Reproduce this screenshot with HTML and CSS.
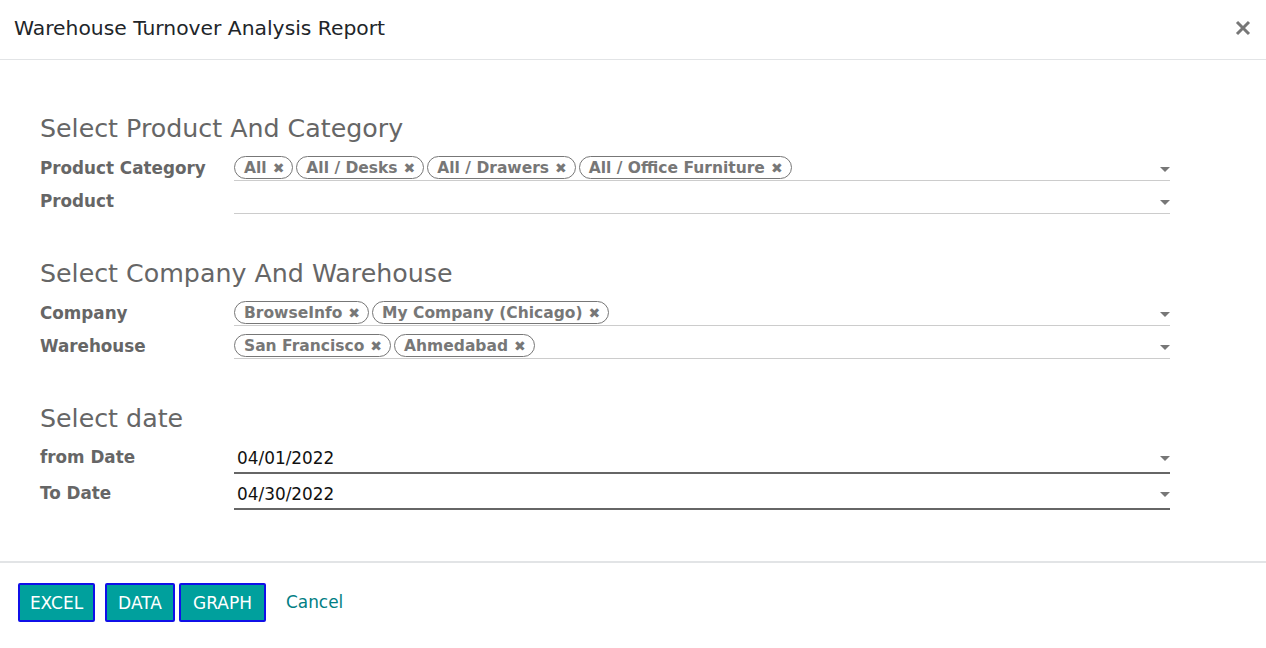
FILE: index.html
```html
<!DOCTYPE html>
<html>
<head>
<meta charset="utf-8">
<link rel="stylesheet" href="styles.css">
</head>
<body>
<div class="modal">
  <header class="modal-header">
    <h4 class="modal-title">Warehouse Turnover Analysis Report</h4>
    <svg class="close" width="16" height="16" viewBox="0 0 16 16"><path d="M2 2 L14 14 M14 2 L2 14" stroke="#777" stroke-width="3" stroke-linecap="butt"/></svg>
  </header>
  <main class="modal-body">
    <section class="group">
      <h3 class="group-title">Select Product And Category</h3>
      <div class="row">
        <label class="label">Product Category</label>
        <div class="field">
          <div class="tags">
            <span class="tag">All <span class="x">✖</span></span>
            <span class="tag">All / Desks <span class="x">✖</span></span>
            <span class="tag">All / Drawers <span class="x">✖</span></span>
            <span class="tag">All / Office Furniture <span class="x">✖</span></span>
          </div>
          <span class="caret"></span>
        </div>
      </div>
      <div class="row">
        <label class="label">Product</label>
        <div class="field"><div class="tags"></div><span class="caret"></span></div>
      </div>
    </section>
    <section class="group">
      <h3 class="group-title">Select Company And Warehouse</h3>
      <div class="row">
        <label class="label">Company</label>
        <div class="field">
          <div class="tags">
            <span class="tag">BrowseInfo <span class="x">✖</span></span>
            <span class="tag">My Company (Chicago) <span class="x">✖</span></span>
          </div>
          <span class="caret"></span>
        </div>
      </div>
      <div class="row">
        <label class="label">Warehouse</label>
        <div class="field">
          <div class="tags">
            <span class="tag">San Francisco <span class="x">✖</span></span>
            <span class="tag">Ahmedabad <span class="x">✖</span></span>
          </div>
          <span class="caret"></span>
        </div>
      </div>
    </section>
    <section class="group">
      <h3 class="group-title">Select date</h3>
      <div class="row date-row">
        <label class="label">from Date</label>
        <div class="field date"><span class="value">04/01/2022</span><span class="caret"></span></div>
      </div>
      <div class="row date-row">
        <label class="label">To Date</label>
        <div class="field date"><span class="value">04/30/2022</span><span class="caret"></span></div>
      </div>
    </section>
  </main>
  <footer class="modal-footer">
    <button class="btn btn-excel">EXCEL</button>
    <button class="btn btn-data">DATA</button>
    <button class="btn btn-graph">GRAPH</button>
    <a class="cancel">Cancel</a>
  </footer>
</div>
</body>
</html>
```
FILE: styles.css
```css
* { box-sizing: border-box; }
html, body { margin: 0; padding: 0; background: #fff; }
body {
  font-family: "DejaVu Sans", sans-serif;
  color: #212529;
  width: 1266px;
  height: 648px;
  overflow: hidden;
}
.modal { display: flex; flex-direction: column; height: 648px; }
.modal-header {
  height: 60px;
  border-bottom: 1px solid #e2e4e6;
  display: flex;
  align-items: center;
  justify-content: space-between;
  padding: 0 15px 3px 14px;
}
.modal-title {
  margin: 0;
  font-size: 20.3px;
  font-weight: normal;
  color: #212529;
}
.close { display: block; margin-top: -1px; }
.modal-body {
  flex: 1;
  padding: 54px 96px 0 40px;
}
.group { margin-bottom: 37px; }
.group:last-child { margin-bottom: 0; }
.group-title {
  margin: 0 0 12px 0;
  font-size: 25.3px;
  font-weight: normal;
  color: #666;
  line-height: 30px;
}
.row {
  display: grid;
  grid-template-columns: 194px 1fr;
  align-items: start;
  height: 33px;
}
.label {
  font-weight: bold;
  font-size: 16.8px;
  color: #666;
  line-height: 22px;
  padding-top: 1px;
  white-space: nowrap;
}
.field {
  position: relative;
  height: 25px;
  border-bottom: 1px solid #ccc;
  display: flex;
  align-items: flex-start;
}
.tags { display: flex; gap: 3px; }
.tag {
  display: inline-flex;
  align-items: center;
  gap: 6px;
  height: 23px;
  border: 1.5px solid #777;
  border-radius: 12px;
  padding: 0 8px 0 9px;
  font-size: 15.5px;
  font-weight: bold;
  color: #777;
  white-space: nowrap;
}
.x { font-size: 14px; }
.caret {
  position: absolute;
  right: 0;
  top: 11px;
  width: 0; height: 0;
  border-left: 5px solid transparent;
  border-right: 5px solid transparent;
  border-top: 5px solid #777;
}
.date-row { height: 36px; }
.date-row .label { padding-top: 0; }
.field.date {
  height: 28px;
  border-bottom: 2px solid #666;
  align-items: center;
}
.field.date .value {
  font-size: 16.9px;
  color: #111;
  padding-left: 3px;
  padding-bottom: 3px;
}
.field.date .caret { top: 10px; }
.modal-footer {
  height: 87px;
  border-top: 2px solid #e2e4e6;
  display: flex;
  align-items: flex-start;
  padding: 20px 18px 0 18px;
}
.btn {
  font-family: "DejaVu Sans", sans-serif;
  background: #00a09d;
  color: #fff;
  font-size: 17px;
  height: 39px;
  border: 2px solid #1010e8;
  border-radius: 2px;
  padding: 0;
  margin: 0;
}
.btn-excel { width: 77px; margin-right: 10px; }
.btn-data { width: 70px; margin-right: 4px; }
.btn-graph { width: 87px; }
.cancel {
  color: #017e84;
  font-size: 16.9px;
  line-height: 39px;
  margin-left: 20px;
  cursor: pointer;
}
```
